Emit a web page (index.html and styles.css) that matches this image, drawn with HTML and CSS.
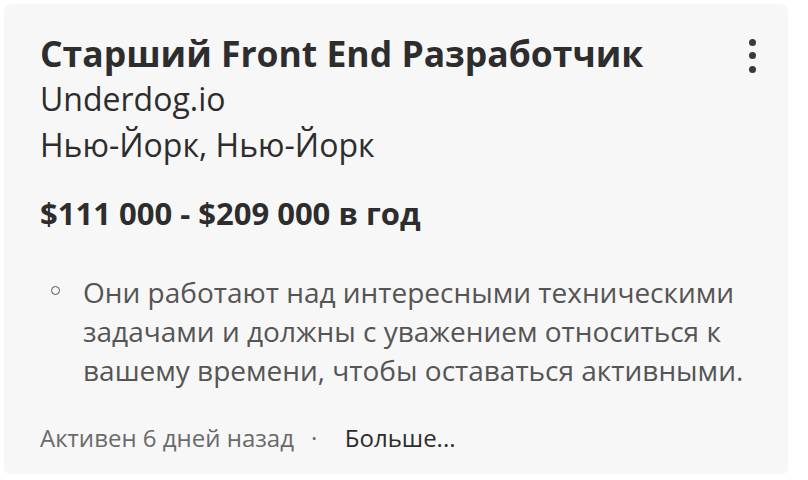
FILE: index.html
```html
<!DOCTYPE html>
<html lang="ru">
<head>
<meta charset="utf-8">
<link rel="stylesheet" href="styles.css">
</head>
<body>
<div class="card">
  <div class="head">
    <div class="info">
      <h1 class="title">Старший Front End Разработчик</h1>
      <div class="company">Underdog.io</div>
      <div class="location">Нью-Йорк, Нью-Йорк</div>
    </div>
    <div class="kebab"><span></span><span></span><span></span></div>
  </div>
  <div class="salary">$111 000 - $209 000 в год</div>
  <div class="snippet">
    <span class="bullet"></span>
    <p class="snippet-text">Они работают над интересными техническими задачами и должны с уважением относиться к вашему времени, чтобы оставаться активными.</p>
  </div>
  <div class="footer">
    <span class="date">Активен 6 дней назад</span>
    <span class="sep">·</span>
    <span class="more">Больше...</span>
  </div>
</div>
</body>
</html>
```
FILE: styles.css
```css
html, body {
  margin: 0;
  padding: 0;
  background: #ffffff;
}
body {
  width: 808px;
  height: 480px;
  overflow: hidden;
  font-family: "Open Sans", "Noto Sans", sans-serif;
}
.card {
  margin: 4px 20px 6px 4px;
  height: 470px;
  box-sizing: border-box;
  background: #f7f7f7;
  border-radius: 6px;
  padding: 26px 0 0 36px;
}
.head {
  display: flex;
  justify-content: space-between;
}
.title {
  margin: 0;
  font-size: 35.5px;
  font-weight: 700;
  line-height: 46px;
  color: #2d2d2d;
}
.company, .location {
  font-size: 32px;
  line-height: 46px;
  color: #2d2d2d;
}
.kebab {
  display: flex;
  flex-direction: column;
  gap: 6.7px;
  padding: 8.5px 32.5px 0 0;
}
.kebab span {
  width: 7px;
  height: 7px;
  border-radius: 50%;
  background: #3a3a3a;
}
.salary {
  margin-top: 25px;
  font-size: 31px;
  font-weight: 700;
  line-height: 40px;
  color: #2d2d2d;
}
.snippet {
  margin-top: 40px;
  display: flex;
  align-items: flex-start;
}
.bullet {
  flex: none;
  width: 9px;
  height: 9px;
  box-sizing: border-box;
  border: 1.5px solid #555;
  border-radius: 50%;
  margin: 13px 23px 0 11px;
}
.snippet-text {
  margin: 0;
  font-size: 28px;
  line-height: 39px;
  color: #555;
}
.footer {
  margin-top: 33px;
  font-size: 24px;
  line-height: 30px;
  color: #6a6a6a;
  display: flex;
  align-items: center;
}
.sep {
  margin: 0 27.5px 0 17px;
}
.more {
  color: #2d2d2d;
}
```
